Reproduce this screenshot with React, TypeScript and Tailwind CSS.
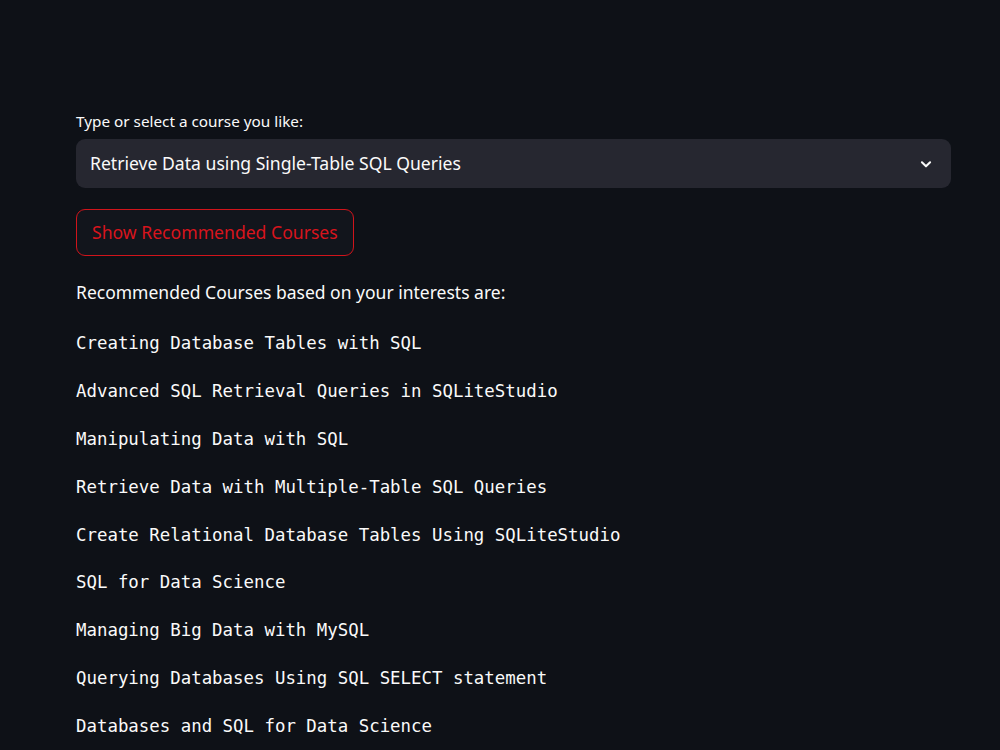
const courses = [
  "Creating Database Tables with SQL",
  "Advanced SQL Retrieval Queries in SQLiteStudio",
  "Manipulating Data with SQL",
  "Retrieve Data with Multiple-Table SQL Queries",
  "Create Relational Database Tables Using SQLiteStudio",
  "SQL for Data Science",
  "Managing Big Data with MySQL",
  "Querying Databases Using SQL SELECT statement",
  "Databases and SQL for Data Science",
];

const sans = { fontFamily: '"Noto Sans", "Open Sans", sans-serif' };

export default function App() {
  return (
    <main className="min-h-[750px] h-[750px] overflow-hidden bg-[#0e1117] text-[#fafafa]" style={sans}>
      <div className="pl-[76px] pr-[49px] pt-[108px]">
        <label className="block text-[15.3px] leading-[26px] text-[#fafafa]">
          Type or select a course you like:
        </label>
        <div className="mt-[5px] flex h-[49px] items-center justify-between rounded-[9px] bg-[#262730] pl-[14px] pr-[18px]">
          <span className="text-[17.6px]">Retrieve Data using Single-Table SQL Queries</span>
          <svg width="14" height="14" viewBox="0 0 24 24" fill="none" stroke="#fafafa" strokeWidth="3.5" strokeLinecap="round" strokeLinejoin="round">
            <path d="M5 9l7 7 7-7" />
          </svg>
        </div>
        <button className="mt-[21px] flex h-[47px] items-center rounded-[9px] border border-[#d0141b] bg-[#12151c] px-[15px] text-[17.6px] text-[#d8141c]">
          Show Recommended Courses
        </button>
        <p className="mt-[22px] text-[17.5px] leading-[28px]">Recommended Courses based on your interests are:</p>
        <div className="mt-[25px] flex flex-col" style={{ fontFamily: '"DejaVu Sans Mono", "Liberation Mono", monospace' }}>
          {courses.map((c) => (
            <div key={c} className="h-[47.9px] text-[17.4px] leading-[24px] text-[#fafafa]">
              {c}
            </div>
          ))}
        </div>
      </div>
    </main>
  );
}
